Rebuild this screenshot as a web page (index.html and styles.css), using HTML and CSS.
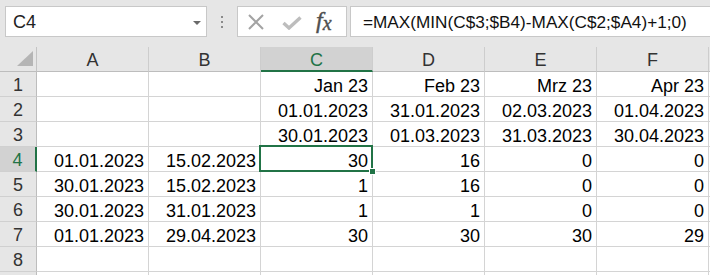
FILE: index.html
```html
<!DOCTYPE html>
<html>
<head>
<meta charset="utf-8">
<link rel="stylesheet" href="styles.css">
</head>
<body>
<div class="app">
  <div class="toolbar">
    <div class="namebox">
      <span class="name">C4</span>
      <span class="caret"></span>
    </div>
    <div class="dots"><i></i><i></i><i></i></div>
    <div class="fxbox">
      <svg class="ico-x" width="18" height="16" viewBox="0 0 18 16"><path d="M2 1 L16 15 M16 1 L2 15" stroke="#a3a3a3" stroke-width="2" fill="none"/></svg>
      <svg class="ico-check" width="20" height="14" viewBox="0 0 20 14"><path d="M1.5 7 L7 12 L18.5 1.5" stroke="#bdbdbd" stroke-width="3.4" fill="none"/></svg>
      <span class="fx"><span class="f">f</span><span class="x">x</span></span>
    </div>
    <div class="formula">=MAX(MIN(C$3;$B4)-MAX(C$2;$A4)+1;0)</div>
  </div>
  <div class="sheet">
    <div class="corner"><svg width="36" height="24" viewBox="0 0 36 24"><polygon points="17,19 33,19 33,4" fill="#b5b5b5"/></svg></div>
    <div class="ch">A</div><div class="ch">B</div><div class="ch sel">C</div><div class="ch">D</div><div class="ch">E</div><div class="ch">F</div><div class="ch"></div>

    <div class="rh">1</div><div class="c"></div><div class="c"></div><div class="c">Jan 23</div><div class="c">Feb 23</div><div class="c">Mrz 23</div><div class="c">Apr 23</div><div class="c"></div>
    <div class="rh">2</div><div class="c"></div><div class="c"></div><div class="c">01.01.2023</div><div class="c">31.01.2023</div><div class="c">02.03.2023</div><div class="c">01.04.2023</div><div class="c"></div>
    <div class="rh">3</div><div class="c"></div><div class="c"></div><div class="c">30.01.2023</div><div class="c">01.03.2023</div><div class="c">31.03.2023</div><div class="c">30.04.2023</div><div class="c"></div>
    <div class="rh sel">4</div><div class="c">01.01.2023</div><div class="c">15.02.2023</div><div class="c active">30<span class="handle"></span></div><div class="c">16</div><div class="c">0</div><div class="c">0</div><div class="c"></div>
    <div class="rh">5</div><div class="c">30.01.2023</div><div class="c">15.02.2023</div><div class="c">1</div><div class="c">16</div><div class="c">0</div><div class="c">0</div><div class="c"></div>
    <div class="rh">6</div><div class="c">30.01.2023</div><div class="c">31.01.2023</div><div class="c">1</div><div class="c">1</div><div class="c">0</div><div class="c">0</div><div class="c"></div>
    <div class="rh">7</div><div class="c">01.01.2023</div><div class="c">29.04.2023</div><div class="c">30</div><div class="c">30</div><div class="c">30</div><div class="c">29</div><div class="c"></div>
    <div class="rh">8</div><div class="c"></div><div class="c"></div><div class="c"></div><div class="c"></div><div class="c"></div><div class="c"></div><div class="c"></div>
    <div class="rh"></div><div class="c"></div><div class="c"></div><div class="c"></div><div class="c"></div><div class="c"></div><div class="c"></div><div class="c"></div>
  </div>
</div>
</body>
</html>
```

FILE: styles.css
```css
* { box-sizing: border-box; margin: 0; padding: 0; }
html, body { width: 710px; height: 275px; overflow: hidden; background: #e6e6e6; }
body { font-family: "Liberation Sans", Arial, sans-serif; font-size: 18px; color: #000; }

.app { width: 710px; height: 275px; overflow: hidden; }

.toolbar {
  height: 47px;
  display: flex;
  align-items: flex-start;
  padding: 6px 0 0 5px;
  background: #e6e6e6;
}
.namebox {
  width: 202px;
  height: 31px;
  background: #fff;
  border: 1px solid #c8c8c8;
  display: flex;
  align-items: center;
  justify-content: space-between;
  padding: 1px 5px 0 7px;
  color: #222;
}
.caret {
  width: 0; height: 0;
  border-left: 4px solid transparent;
  border-right: 4px solid transparent;
  border-top: 4px solid #6a6a6a;
  margin-top: 1px;
}
.dots {
  width: 30px;
  height: 31px;
  display: flex;
  flex-direction: column;
  align-items: center;
  justify-content: center;
  gap: 3px;
}
.dots i { display: block; width: 2px; height: 2px; background: #8a8a8a; }
.fxbox {
  width: 110px;
  height: 31px;
  background: #fff;
  border: 1px solid #c8c8c8;
  display: flex;
  align-items: center;
  padding-left: 9px;
}
.ico-check { margin-left: 17px; margin-top: 2px; }
.fx {
  margin-left: 14px;
  font-family: "Liberation Serif", "Times New Roman", serif;
  font-style: italic;
  color: #505050;
  font-size: 24px;
  line-height: 1;
  margin-top: -3px;
  -webkit-text-stroke: 0.4px #505050;
}
.fx .x { font-size: 20px; margin-left: 0; position: relative; top: 2px; }
.formula {
  flex: 1;
  margin-left: 3px;
  height: 31px;
  background: #fff;
  border: 1px solid #c8c8c8;
  border-right: none;
  padding: 3px 0 0 12px;
  line-height: 24px;
  font-size: 17.2px;
  white-space: nowrap;
  color: #111;
}

.sheet {
  display: grid;
  grid-template-columns: 37px repeat(6, 112px) 20px;
  grid-auto-rows: 25px;
  background: #fff;
}
.corner {
  background: #e6e6e6;
  border-right: 1px solid #c4c4c4;
  border-bottom: 1px solid #bdbdbd;
}
.corner svg { display: block; }
.ch {
  background: #e6e6e6;
  border-right: 1px solid #cdcdcd;
  border-bottom: 1px solid #bdbdbd;
  text-align: center;
  line-height: 24px;
  padding-top: 1px;
  color: #333;
}
.ch.sel {
  background: #d2d2d2;
  color: #217346;
  border-bottom: 2px solid #217346;
}
.rh {
  background: #e6e6e6;
  border-right: 1px solid #bdbdbd;
  border-bottom: 1px solid #d0d0d0;
  text-align: center;
  line-height: 24px;
  padding-top: 1px;
  color: #333;
}
.rh.sel {
  background: #d2d2d2;
  color: #217346;
  border-right: 2px solid #217346;
}
.c {
  border-right: 1px solid #d4d4d4;
  border-bottom: 1px solid #d4d4d4;
  text-align: right;
  padding: 2px 4px 0 0;
  line-height: 24px;
  white-space: nowrap;
  background: #fff;
}
.active { position: relative; }
.active::after {
  content: "";
  position: absolute;
  left: -2px; top: -2px; right: -1px; bottom: -1px;
  border: 2px solid #217346;
  pointer-events: none;
}
.handle {
  position: absolute;
  right: -4px;
  bottom: -4px;
  width: 7px;
  height: 7px;
  background: #217346;
  border: 1px solid #fff;
  z-index: 2;
}
```
